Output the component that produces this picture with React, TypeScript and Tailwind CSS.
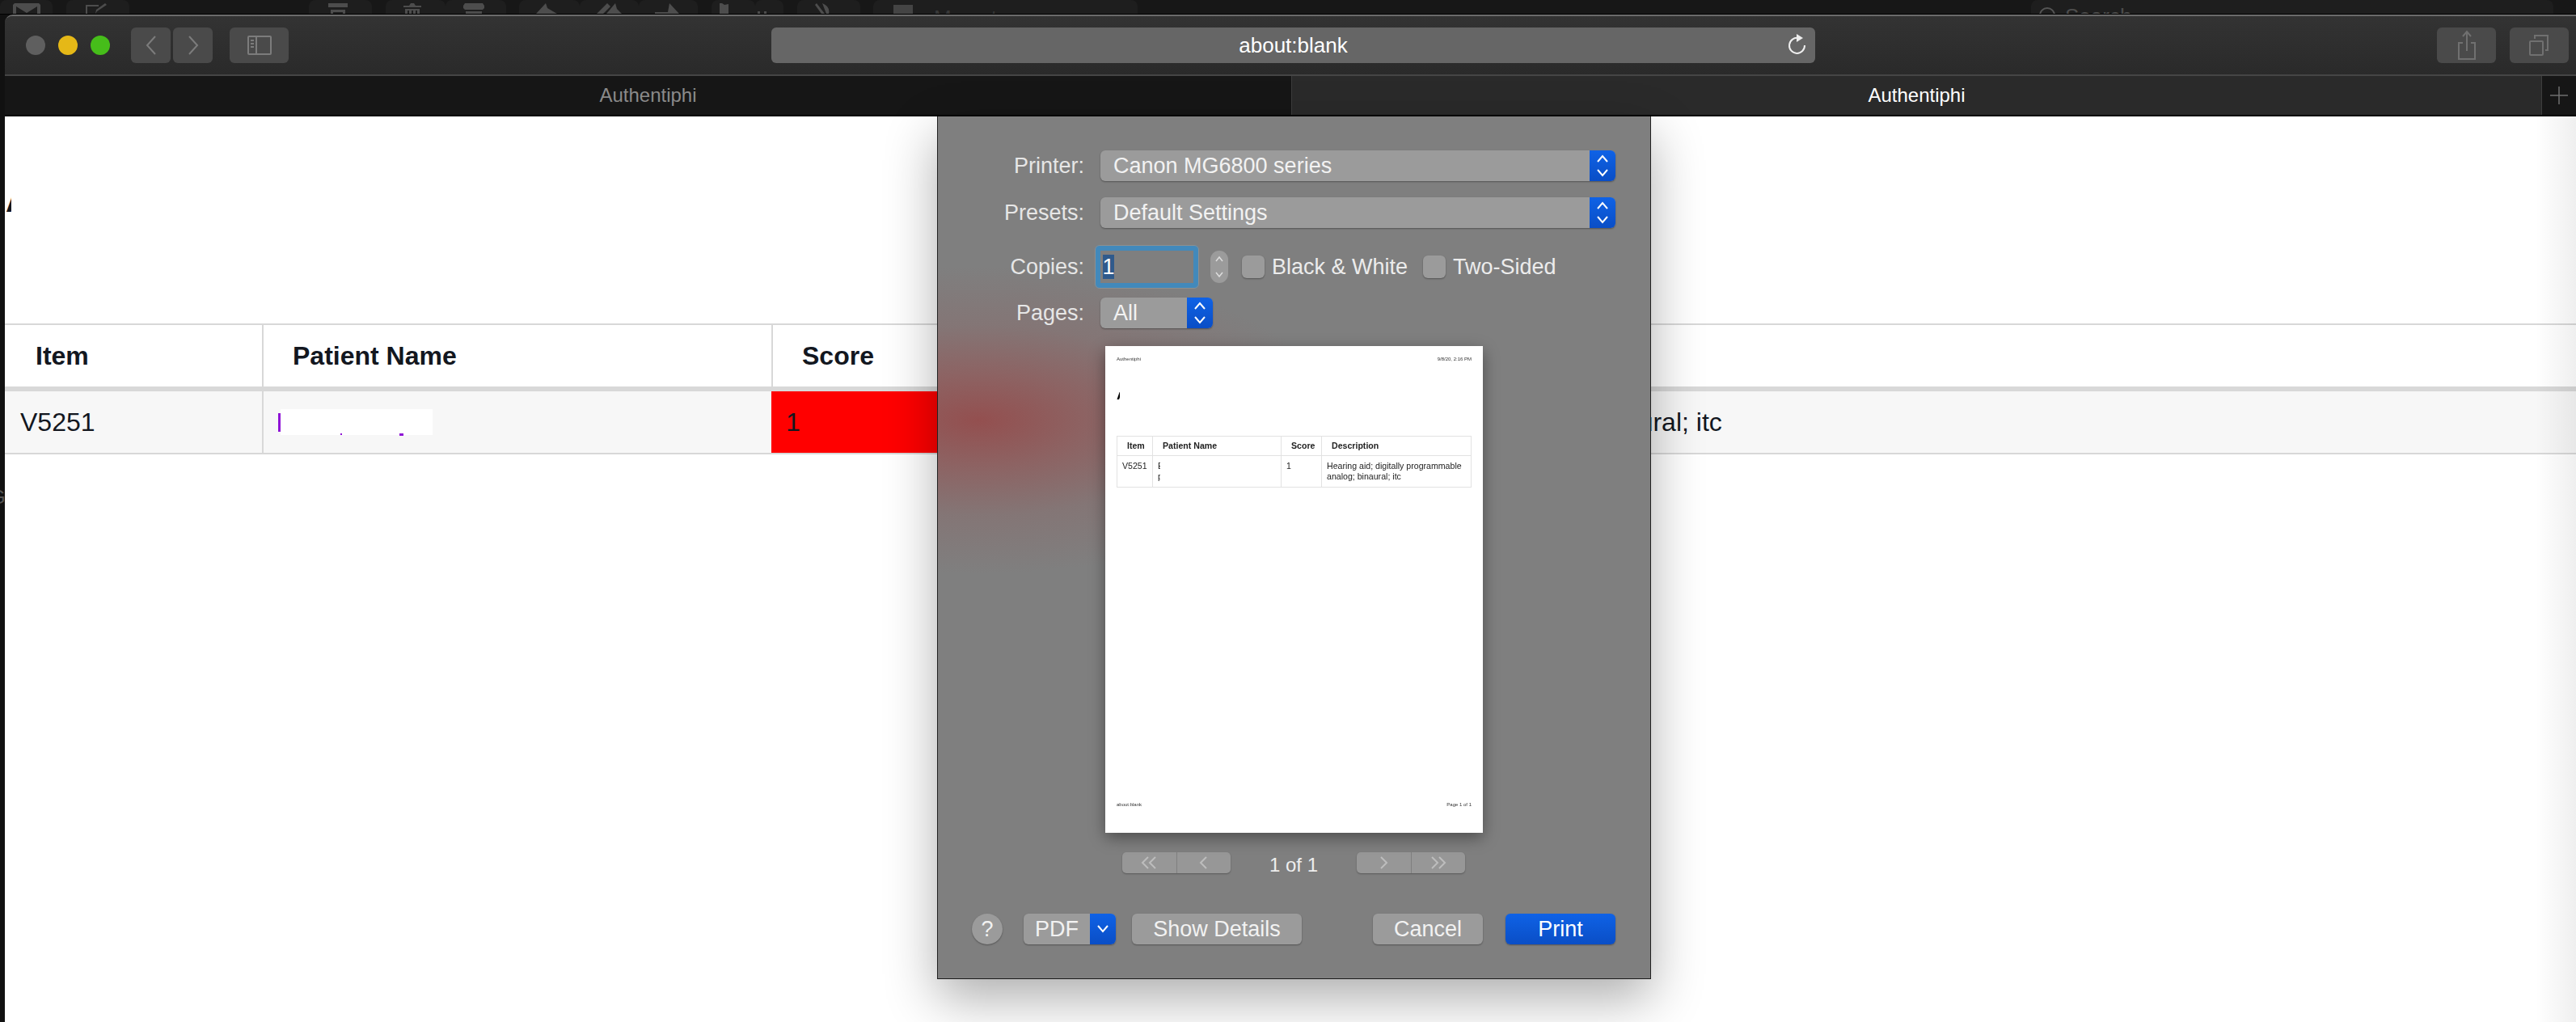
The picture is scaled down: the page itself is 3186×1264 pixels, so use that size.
import type { ReactNode } from "react";

const font = "font-['Liberation_Sans',Arial,sans-serif]";

// dim buttons of the mail window behind, only their lower part peeks out
const behindButtons = [
  { w: 65, ml: 0, icon: "M0 13V2l2-2h30l2 2v11h-4V4L17 12 4 4v9z" },
  { w: 78, ml: 17, icon: "M2 13V2h16v2H4v9zM16 10l-2 3 1-5L26 0l2 2z" },
  { w: 78, ml: 222, icon: "M2 0h24v5H2zM5 8h18v5h-3v-2H8v2H5z" },
  { w: 74, ml: 17, icon: "M9 3l2-3h4l2 3h7v2H2V3zM4 7h18v6h-3V9h-2v4h-3V9h-2v4H9V9H7v4H4z" },
  { w: 75, ml: 0, icon: "M3 0h22l2 3v3l-2 2H3L1 6V3zM4 10h20v3H4z" },
  { w: 75, ml: 16, icon: "M12 0l2 6 12 7H0z" },
  { w: 73, ml: 0, icon: "M14 0l4 4-9 9H1zM24 0l2 7 6 6H13z" },
  { w: 73, ml: 0, icon: "M18 0l12 13H0v-2h16z" },
  { w: 54, ml: 17, icon: "M0 0h3l3 2 5-1v12H0z" },
  { w: 35, ml: 0, icon: "M2 10h3v3H2zM10 10h3v3h-3z" },
  { w: 78, ml: 17, icon: "M2 0l10 13H8L0 2zM9 0q10 4 8 13h-3z" },
];

const BehindWindow = () => (
  <div className="flex h-[18px] shrink-0 overflow-hidden border-b border-black bg-[#171717]">
    {behindButtons.map((b, i) => (
      <div
        key={i}
        style={{ width: b.w, marginLeft: b.ml }}
        className="flex shrink-0 items-end justify-center rounded-t-[8px] bg-[#1e1e1e]"
      >
        <svg width="34" height="13" viewBox="0 0 34 13" fill="#4d4d4d">
          <path d={b.icon} />
        </svg>
      </div>
    ))}
    <div className="ml-[16px] flex w-[327px] shrink-0 items-start rounded-t-[8px] bg-[#1e1e1e] pl-[25px] text-[26px] leading-none text-[#383838]">
      <span className="mr-[26px] mt-[6px] h-[12px] w-[24px] bg-[#444444]" />
      <span className="mt-[9px]">Move to</span>
    </div>
    <div className="ml-[1105px] flex w-[646px] shrink-0 items-start gap-[12px] rounded-t-[8px] bg-[#1e1e1e] pl-[10px] text-[26px] leading-none text-[#4d4d4d]">
      <span className="mt-[9px] size-[20px] shrink-0 rounded-full border-2 border-[#555555]" />
      <span className="mt-[7px]">Search</span>
    </div>
  </div>
);

const ToolButton = ({ w, children }: { w: number; children: ReactNode }) => (
  <div style={{ width: w }} className="flex h-[44px] shrink-0 items-center justify-center rounded-[6px] bg-[#4a4a4a]">
    {children}
  </div>
);

const Toolbar = () => (
  <div className="flex h-[72px] shrink-0 items-center bg-gradient-to-b from-[#333333] to-[#2a2a2a]">
    <div className="ml-[26px] size-[24px] rounded-full bg-[#5f5f5f]" />
    <div className="ml-[16px] size-[24px] rounded-full bg-[#e5b817]" />
    <div className="ml-[16px] size-[24px] rounded-full bg-[#46bd1a]" />
    <div className="ml-[26px]">
      <ToolButton w={49}>
        <svg width="14" height="26" viewBox="0 0 14 26" fill="none" stroke="#7c7c7c" strokeWidth="2">
          <path d="M12 2 2 13l10 11" />
        </svg>
      </ToolButton>
    </div>
    <div className="ml-[3px]">
      <ToolButton w={49}>
        <svg width="14" height="26" viewBox="0 0 14 26" fill="none" stroke="#7c7c7c" strokeWidth="2">
          <path d="m2 2 10 11L2 24" />
        </svg>
      </ToolButton>
    </div>
    <div className="ml-[21px]">
      <ToolButton w={73}>
        <svg width="30" height="26" viewBox="0 0 30 26" fill="none" stroke="#7c7c7c" strokeWidth="2">
          <rect x="1" y="2" width="28" height="22" rx="1" />
          <path d="M11 2v22" />
          <path d="M4 7h4M4 11h4M4 15h4" />
        </svg>
      </ToolButton>
    </div>
    <div className="relative ml-[597px] flex h-[44px] w-[1291px] shrink-0 items-center justify-center rounded-[6px] bg-[#666666] text-[26px] text-white">
      about:blank
      <svg
        className="absolute right-[11px] top-[7px]"
        width="24"
        height="28"
        viewBox="0 0 24 28"
        fill="none"
        stroke="#eeeeee"
        strokeWidth="2"
      >
        <path d="M14 6a9.5 9.5 0 1 0 8 9" />
        <path d="M12 1l8 5-8 5z" fill="#eeeeee" stroke="none" />
      </svg>
    </div>
    <div className="ml-[769px]">
      <ToolButton w={73}>
        <svg width="24" height="38" viewBox="0 0 24 38" fill="none" stroke="#707070" strokeWidth="2">
          <path d="M7 16H2v20h20V16h-5" />
          <path d="M12 26V2M7 8l5-6 5 6" />
        </svg>
      </ToolButton>
    </div>
    <div className="ml-[17px]">
      <ToolButton w={73}>
        <svg width="26" height="26" viewBox="0 0 26 26" fill="none" stroke="#707070" strokeWidth="2">
          <rect x="1" y="8" width="16" height="17" rx="1" />
          <path d="M7 5V1h16v18h-3" />
        </svg>
      </ToolButton>
    </div>
  </div>
);

const TabStrip = () => (
  <div className="flex h-[50px] shrink-0 border-b-2 border-black text-[24px]">
    <div className="flex w-[1591px] items-center justify-center bg-[#161616] text-[#8a8a8a]">Authentiphi</div>
    <div className="flex w-[1546px] items-center justify-center border-l border-[#3d3d3d] bg-[#2a2a2a] text-white">
      Authentiphi
    </div>
    <div className="flex flex-1 items-center justify-center border-l border-[#3d3d3d] bg-[#161616]">
      <svg width="24" height="24" viewBox="0 0 24 24" stroke="#6f6f6f" strokeWidth="1.5">
        <path d="M12 1v22M1 12h22" />
      </svg>
    </div>
  </div>
);

const PageTable = () => (
  <div className="text-[32px] text-[#13171f]">
    <div className="flex h-[84px] border-y-[2px] border-b-[6px] border-[#d8d8d8] font-bold">
      <div className="flex w-[318px] items-center pl-[38px]">Item</div>
      <div className="flex w-[630px] items-center border-l-2 border-[#d8d8d8] pl-[36px]">Patient Name</div>
      <div className="flex w-[368px] items-center border-l-2 border-[#d8d8d8] pl-[36px]">Score</div>
      <div className="flex flex-1 items-center pl-[18px]">Description</div>
    </div>
    <div className="flex h-[78px] border-b-2 border-[#d8d8d8] bg-[#f7f7f7]">
      <div className="flex w-[318px] items-center pl-[19px]">V5251</div>
      <div className="relative flex w-[630px] items-center border-l-2 border-[#d8d8d8] pl-[18px]">
        <div className="h-[23px] w-[3px] bg-[#8f14d6]" />
        <div className="h-[32px] w-[188px] bg-white" />
        <div className="absolute left-[95px] top-[52px] h-[2px] w-[2px] bg-[#8f14d6]" />
        <div className="absolute left-[168px] top-[52px] h-[3px] w-[5px] bg-[#8f14d6]" />
      </div>
      <div className="flex w-[368px] items-center bg-[#ff0000] pl-[18px]">1</div>
      <div className="flex flex-1 items-center whitespace-nowrap pl-[18px]">
        Hearing aid; digitally programmable analog; binaural; itc
      </div>
    </div>
  </div>
);

const Chevrons = () => (
  <svg width="16" height="28" viewBox="0 0 16 28" fill="none" stroke="#ffffff" strokeWidth="2">
    <path d="m2 9 6-7 6 7M2 19l6 7 6-7" />
  </svg>
);

const Select = ({ label, w }: { label: string; w: number }) => (
  <div
    style={{ width: w }}
    className="flex h-[38px] overflow-hidden rounded-[6px] bg-[#9b9b9b] text-[27px] leading-none text-[#f2f2f2] shadow-[0_1px_2px_rgba(0,0,0,0.35)]"
  >
    <div className="flex flex-1 items-center pl-[16px]">{label}</div>
    <div className="flex w-[32px] items-center justify-center bg-gradient-to-b from-[#0f62e6] to-[#0a4ec6]">
      <Chevrons />
    </div>
  </div>
);

const Label = ({ children }: { children: ReactNode }) => (
  <div className="w-[181px] shrink-0 text-right text-[27px] leading-none text-[#e6e6e6]">{children}</div>
);

const Checkbox = ({ label, className }: { label: string; className: string }) => (
  <div className={`flex items-center gap-[9px] text-[27px] leading-none text-[#ececec] ${className}`}>
    <div className="size-[28px] rounded-[6px] bg-[#9b9b9b] shadow-[0_1px_2px_rgba(0,0,0,0.35)]" />
    {label}
  </div>
);

const PaperTable = () => (
  <div className="mt-[42px] border border-[#e2e2e2] text-[10.6px] leading-[13px] text-[#222222]">
    <div className="flex h-[24px] border-b border-[#e2e2e2] font-bold">
      <div className="flex w-[43px] items-center pl-[12px]">Item</div>
      <div className="flex w-[159px] items-center border-l border-[#e2e2e2] pl-[12px]">Patient Name</div>
      <div className="flex w-[50px] items-center border-l border-[#e2e2e2] pl-[12px]">Score</div>
      <div className="flex flex-1 items-center border-l border-[#e2e2e2] pl-[12px]">Description</div>
    </div>
    <div className="flex h-[38px]">
      <div className="w-[43px] pl-[6px] pt-[6px]">V5251</div>
      <div className="w-[159px] border-l border-[#e2e2e2] pl-[6px] pt-[6px]">
        <div className="w-[3px] overflow-hidden">E</div>
        <div className="w-[3px] overflow-hidden">p</div>
      </div>
      <div className="w-[50px] border-l border-[#e2e2e2] pl-[6px] pt-[6px]">1</div>
      <div className="flex-1 border-l border-[#e2e2e2] pl-[6px] pt-[6px]">
        Hearing aid; digitally programmable analog; binaural; itc
      </div>
    </div>
  </div>
);

const Paper = () => (
  <div className="mx-auto mt-[22px] flex h-[602px] w-[467px] flex-col bg-white px-[14px] pt-[12px] shadow-[0_6px_18px_rgba(0,0,0,0.4)] blur-[0.4px]">
    <div className="flex justify-between text-[6px] leading-[8px] text-[#333333]">
      <span>Authentiphi</span>
      <span>9/8/20, 2:16 PM</span>
    </div>
    <div className="mt-[37px] h-[12px] w-[4px] overflow-hidden text-[18px] font-bold leading-[6px] text-black">A</div>
    <PaperTable />
    <div className="mb-[31px] mt-auto flex justify-between text-[6px] leading-[8px] text-[#333333]">
      <span>about:blank</span>
      <span>Page 1 of 1</span>
    </div>
  </div>
);

const Pager = ({ left, right }: { left: string; right: string }) => (
  <div className="flex h-[26px] w-[134px] rounded-[5px] bg-[#979797] shadow-[0_1px_2px_rgba(0,0,0,0.3)]">
    <div className="flex flex-1 items-center justify-center border-r border-[#7f7f7f]">
      <svg width="26" height="18" viewBox="0 0 26 18" fill="none" stroke="#bdbdbd" strokeWidth="2">
        <path d={left} />
      </svg>
    </div>
    <div className="flex flex-1 items-center justify-center">
      <svg width="26" height="18" viewBox="0 0 26 18" fill="none" stroke="#bdbdbd" strokeWidth="2">
        <path d={right} />
      </svg>
    </div>
  </div>
);

const Button = ({ label, w }: { label: string; w: number }) => (
  <div
    style={{ width: w }}
    className="flex h-[38px] items-center justify-center rounded-[6px] bg-[#9b9b9b] text-[27px] leading-none text-[#f2f2f2] shadow-[0_1px_2px_rgba(0,0,0,0.35)]"
  >
    {label}
  </div>
);

const PrintDialog = () => (
  <div className="absolute left-[1159px] top-[144px] flex h-[1067px] w-[883px] flex-col border-x border-b border-x-[#222222] border-b-[#1a1a1a] bg-[#7f7f7f] bg-[radial-gradient(ellipse_450px_190px_at_50px_376px,rgba(160,50,50,0.62),rgba(160,60,60,0.42)_30%,rgba(150,80,80,0.2)_62%,rgba(127,127,127,0))] shadow-[0_24px_60px_rgba(0,0,0,0.32)]">
    <div className="mt-[42px] flex items-center gap-[20px]">
      <Label>Printer:</Label>
      <Select label="Canon MG6800 series" w={637} />
    </div>
    <div className="mt-[20px] flex items-center gap-[20px]">
      <Label>Presets:</Label>
      <Select label="Default Settings" w={637} />
    </div>
    <div className="mt-[21px] flex items-center">
      <Label>Copies:</Label>
      <div className="ml-[13px] h-[54px] w-[129px] rounded-[6px] border-[7px] border-[#4289bb] bg-[#7f7f7f] outline-1 -outline-offset-1 outline-[#8f8f8f]">
        <div className="ml-[3px] mt-[5px] flex h-[30px] w-[14px] items-center justify-center bg-[#2f5a8c] text-[27px] leading-none text-white">
          1
        </div>
      </div>
      <div className="ml-[14px] flex h-[40px] w-[22px] flex-col items-center justify-center rounded-full bg-[#9b9b9b]">
        <svg width="12" height="30" viewBox="0 0 12 30" fill="none" stroke="#dddddd" strokeWidth="1.5">
          <path d="m2 8 4-5 4 5M2 22l4 5 4-5" />
        </svg>
      </div>
      <Checkbox label="Black & White" className="ml-[17px]" />
      <Checkbox label="Two-Sided" className="ml-[19px]" />
    </div>
    <div className="mt-[11px] flex items-center gap-[20px]">
      <Label>Pages:</Label>
      <Select label="All" w={139} />
    </div>
    <Paper />
    <div className="mt-[24px] flex h-[26px] items-center pl-[228px]">
      <Pager left="M12 2 5 9l7 7M21 2l-7 7 7 7" right="M16 2 9 9l7 7" />
      <div className="w-[156px] pt-[6px] text-center text-[24px] leading-none text-[#eeeeee]">1 of 1</div>
      <Pager left="m10 2 7 7-7 7" right="m5 2 7 7-7 7M14 2l7 7-7 7" />
    </div>
    <div className="mt-[50px] flex items-center pl-[42px]">
      <div className="flex size-[38px] items-center justify-center rounded-full bg-[#9b9b9b] text-[27px] leading-none text-[#f2f2f2] shadow-[0_1px_2px_rgba(0,0,0,0.35)]">
        ?
      </div>
      <div className="ml-[26px] flex h-[38px] w-[114px] overflow-hidden rounded-[6px] bg-[#9b9b9b] text-[27px] leading-none text-[#f2f2f2] shadow-[0_1px_2px_rgba(0,0,0,0.35)]">
        <div className="flex flex-1 items-center justify-center">PDF</div>
        <div className="flex w-[32px] items-center justify-center bg-gradient-to-b from-[#0f62e6] to-[#0a4ec6]">
          <svg width="16" height="12" viewBox="0 0 16 12" fill="none" stroke="#ffffff" strokeWidth="2">
            <path d="m2 2 6 7 6-7" />
          </svg>
        </div>
      </div>
      <div className="ml-[20px]">
        <Button label="Show Details" w={210} />
      </div>
      <div className="ml-[88px]">
        <Button label="Cancel" w={136} />
      </div>
      <div className="ml-[28px] flex h-[38px] w-[136px] items-center justify-center rounded-[6px] bg-gradient-to-b from-[#0f62e6] to-[#0a4ec6] text-[27px] leading-none text-white shadow-[0_1px_2px_rgba(0,0,0,0.35)]">
        Print
      </div>
    </div>
  </div>
);

export default function App() {
  return (
    <div className={`relative flex h-[1264px] w-[3186px] flex-col overflow-hidden bg-[#111111] ${font}`}>
      <BehindWindow />
      <div className="flex min-h-0 flex-1 flex-col pl-[6px]">
        <div className="flex h-[126px] shrink-0 flex-col overflow-hidden rounded-tl-[10px] border-t-2 border-t-[#6b6b6b] bg-[#2a2a2a]">
          <Toolbar />
          <div className="h-[2px] shrink-0 bg-[#454545]" />
          <TabStrip />
        </div>
        <div className="relative flex-1 bg-white">
          <div className="h-[256px] pt-[99px]">
            <div className="ml-[1px] h-[19px] w-[7px] overflow-hidden text-[40px] font-bold leading-[10px] text-[#13171f]">
              A
            </div>
          </div>
          <PageTable />
          <div className="absolute inset-y-0 right-0 w-[50px] bg-gradient-to-r from-transparent to-[#00000010]" />
        </div>
      </div>
      {/* bits of the mail list behind, showing in the strip left of the window */}
      <div className="absolute left-0 top-[540px] h-[30px] w-[6px] overflow-hidden text-[24px] leading-[30px] text-[#555555]">
        <div className="-ml-[12px]">s</div>
      </div>
      <div className="absolute left-0 top-[600px] h-[30px] w-[6px] overflow-hidden text-[24px] leading-[30px] text-[#555555]">
        <div className="-ml-[12px]">G</div>
      </div>
      <PrintDialog />
    </div>
  );
}
